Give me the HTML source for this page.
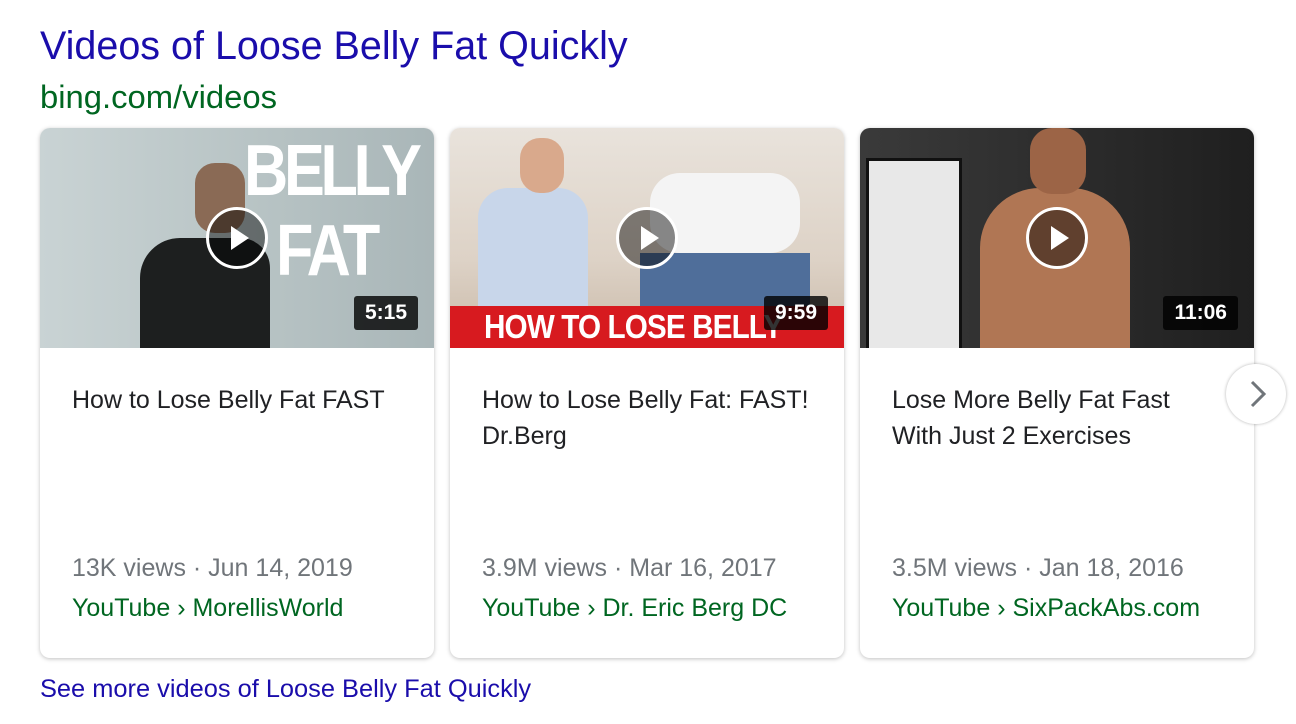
<!DOCTYPE html>
<html><head><meta charset="utf-8"><style>
body{margin:0;width:1296px;height:724px;background:#fff;font-family:"Liberation Sans",Arial,sans-serif;position:relative;overflow:hidden}
.h{position:absolute;left:40px;top:24px;font-size:39.5px;color:#1a0dab}
.u{position:absolute;left:40px;top:78px;font-size:32.8px;color:#006621}
.card{position:absolute;top:128px;width:394px;height:530px;border-radius:10px;background:#fff;box-shadow:0 1px 4px rgba(0,0,0,.25);overflow:hidden}
.th{height:220px;position:relative;overflow:hidden}
.play{position:absolute;left:50%;top:110px;margin:-31px 0 0 -31px;width:56px;height:56px;border:3px solid #fff;border-radius:50%;background:rgba(0,0,0,.45)}
.play:after{content:"";position:absolute;left:22px;top:16px;border-left:18px solid #fff;border-top:12px solid transparent;border-bottom:12px solid transparent}
.dur{position:absolute;right:16px;top:168px;background:rgba(0,0,0,.8);color:#fff;font-weight:bold;font-size:21px;padding:5px 11px;border-radius:3px}
.t{position:absolute;left:32px;top:254px;font-size:25px;line-height:36px;color:#202124;width:336px}
.v{position:absolute;left:32px;top:426px;font-size:25px;color:#70757a}
.s{position:absolute;left:32px;top:466px;font-size:25px;color:#006621}
.big{position:absolute;color:#fff;font-weight:bold;font-family:"Liberation Sans Narrow","Liberation Sans",sans-serif}
.more{position:absolute;left:40px;top:675px;font-size:25.4px;color:#1a0dab}
.nx{position:absolute;left:1226px;top:364px;width:60px;height:60px;border-radius:50%;background:#fff;box-shadow:0 0 3px rgba(0,0,0,.3)}
</style></head><body>
<div class="h">Videos of Loose Belly Fat Quickly</div>
<div class="u">bing.com/videos</div>

<div class="card" style="left:40px"><div class="th" style="background:linear-gradient(90deg,#c9d3d4,#b6c2c3 60%,#a9b6b8)">
<div class="big" style="left:204px;top:2px;font-size:72px;letter-spacing:-5px;transform:scaleX(.85);transform-origin:left">BELLY</div>
<div class="big" style="left:236px;top:82px;font-size:72px;letter-spacing:-4px;transform:scaleX(.85);transform-origin:left">FAT</div>
<div style="position:absolute;left:100px;top:110px;width:130px;height:110px;background:#1d1f1f;border-radius:40px 30px 0 0"></div>
<div style="position:absolute;left:155px;top:35px;width:50px;height:70px;background:#8a6a55;border-radius:20px"></div>
<div class="play"></div><div class="dur">5:15</div></div>
<div class="t">How to Lose Belly Fat FAST</div><div class="v">13K views · Jun 14, 2019</div><div class="s">YouTube › MorellisWorld</div></div>

<div class="card" style="left:450px"><div class="th" style="background:linear-gradient(#e9e3dc,#ddd2c6 60%,#c9b9a8)">
<div style="position:absolute;left:28px;top:60px;width:110px;height:120px;background:#c8d6ea;border-radius:30px 30px 0 0"></div>
<div style="position:absolute;left:70px;top:10px;width:44px;height:55px;background:#d9a98c;border-radius:20px"></div>
<div style="position:absolute;left:200px;top:45px;width:150px;height:80px;background:#f4f4f4;border-radius:30px"></div>
<div style="position:absolute;left:190px;top:125px;width:170px;height:60px;background:#4f6e9a"></div>
<div style="position:absolute;left:0;top:178px;width:394px;height:42px;background:#d71a1f"></div>
<div class="big" style="left:34px;top:180px;font-size:33px;letter-spacing:-1px;transform:scaleX(.9);transform-origin:left">HOW TO LOSE BELLY FAT</div>
<div class="play"></div><div class="dur">9:59</div></div>
<div class="t">How to Lose Belly Fat: FAST! Dr.Berg</div><div class="v">3.9M views · Mar 16, 2017</div><div class="s">YouTube › Dr. Eric Berg DC</div></div>

<div class="card" style="left:860px"><div class="th" style="background:linear-gradient(90deg,#3a3a3a,#2a2a2a 60%,#1f1f1f)">
<div style="position:absolute;left:6px;top:30px;width:90px;height:190px;background:#e8e8e8;border:3px solid #111"></div>
<div style="position:absolute;left:120px;top:60px;width:150px;height:160px;background:#b07654;border-radius:60px 60px 0 0"></div>
<div style="position:absolute;left:170px;top:0;width:56px;height:66px;background:#9c6446;border-radius:22px"></div>
<div class="play"></div><div class="dur">11:06</div></div>
<div class="t">Lose More Belly Fat Fast<br>With Just 2 Exercises</div><div class="v">3.5M views · Jan 18, 2016</div><div class="s">YouTube › SixPackAbs.com</div></div>

<div class="nx"><svg width="60" height="60"><path d="M26 18 L38 30 L26 42" fill="none" stroke="#70757a" stroke-width="3"/></svg></div>
<div class="more">See more videos of Loose Belly Fat Quickly</div>
</body></html>
